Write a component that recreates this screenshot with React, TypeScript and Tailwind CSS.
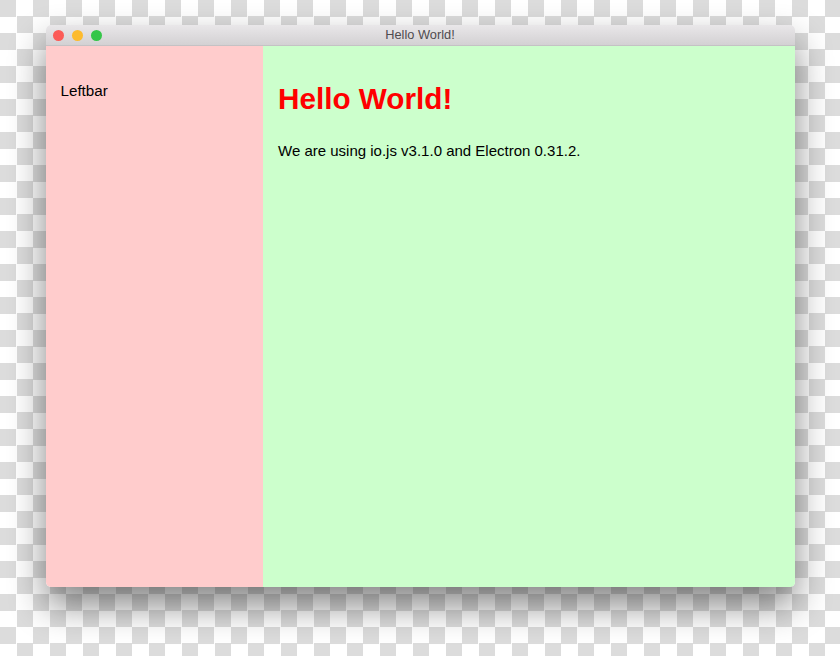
export default function App() {
  return (
    <div className="h-[656px] w-[840px] overflow-hidden bg-[repeating-conic-gradient(#ffffff_0_25%,#dcdcdc_0_50%)] bg-[length:33px_33px] pl-[46px] pt-[25px] font-['Liberation_Sans',sans-serif]">
      <div className="flex h-[562px] w-[749px] flex-col overflow-hidden rounded-[5px] shadow-[0_18px_36px_rgba(0,0,0,0.48)]">
        {/* title bar */}
        <div className="relative flex h-[21px] shrink-0 items-center justify-center border-b border-[#c4c2c4] bg-gradient-to-b from-[#e9e7e9] to-[#d3d1d3] pr-[1px]">
          <div className="absolute left-[6.5px] top-[4.5px] flex gap-[7.5px]">
            <span className="h-[11.5px] w-[11.5px] rounded-full bg-[#fc5b57]" />
            <span className="h-[11.5px] w-[11.5px] rounded-full bg-[#fdbb2e]" />
            <span className="h-[11.5px] w-[11.5px] rounded-full bg-[#35c649]" />
          </div>
          <span className="text-[12.8px] leading-none text-[#4f4c4f]">Hello World!</span>
        </div>

        <div className="flex flex-1">
          {/* leftbar */}
          <div className="w-[217px] bg-[#ffcccc] pl-[14.5px] pt-[35px] text-[15.2px] leading-[20px] text-black">
            Leftbar
          </div>

          {/* main */}
          <div className="flex-1 bg-[#ccffcc] pl-[15px] pt-[35px]">
            <h1 className="text-[29.7px] font-bold leading-[36px] text-[#ff0000]">Hello World!</h1>
            <p className="mt-[24px] text-[15px] leading-[20px] text-black">
              We are using io.js v3.1.0 and Electron 0.31.2.
            </p>
          </div>
        </div>
      </div>
    </div>
  );
}
